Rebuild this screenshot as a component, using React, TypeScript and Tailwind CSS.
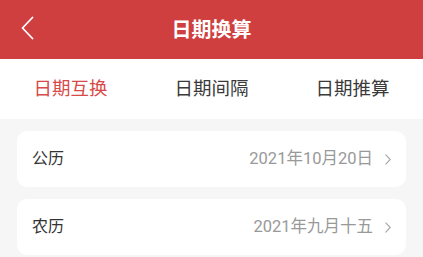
import React from 'react';

const tabs = ['日期互换', '日期间隔', '日期推算'];

const rows = [
  { label: '公历', value: '2021年10月20日' },
  { label: '农历', value: '2021年九月十五' },
];

const font = { fontFamily: 'Roboto, "Noto Sans CJK SC", "Noto Sans", sans-serif' };

const App: React.FC = () => {
  return (
    <div className="w-[423px] h-[257px] overflow-hidden bg-[#f6f6f6]" style={font}>
      {/* Header */}
      <div className="relative h-[59px] bg-[#d03f3f] flex items-center justify-center">
        <svg
          className="absolute left-[20px] top-[16px]"
          width="14"
          height="24"
          viewBox="0 0 14 24"
          fill="none"
        >
          <path d="M12.5 1.5 L2.5 12 L12.5 22.5" stroke="white" strokeWidth="1.8" strokeLinecap="round" strokeLinejoin="round" />
        </svg>
        <h1 className="text-white text-[20px] font-bold leading-none">日期换算</h1>
      </div>

      {/* Tabs */}
      <div className="h-[60px] bg-white grid grid-cols-3 items-center">
        {tabs.map((tab, i) => (
          <div
            key={tab}
            className={`text-center text-[18.5px] leading-none ${i === 0 ? 'text-[#d84a4a]' : 'text-[#3a3a3a]'}`}
          >
            {tab}
          </div>
        ))}
      </div>

      {/* Rows */}
      <div className="px-[17px] pt-[12px] flex flex-col gap-[12px]">
        {rows.map((row) => (
          <div key={row.label} className="h-[56px] bg-white rounded-[10px] flex items-center pl-[15px] pr-[15px]">
            <span className="text-[16px] text-[#333333] leading-none">{row.label}</span>
            <span className="ml-auto text-[16.5px] text-[#999999] leading-none">{row.value}</span>
            <svg className="ml-[12px]" width="6" height="11" viewBox="0 0 6 11" fill="none">
              <path d="M0.8 0.8 L5.2 5.5 L0.8 10.2" stroke="#a8a8a8" strokeWidth="1.1" strokeLinecap="round" strokeLinejoin="round" />
            </svg>
          </div>
        ))}
      </div>
    </div>
  );
};

export default App;
